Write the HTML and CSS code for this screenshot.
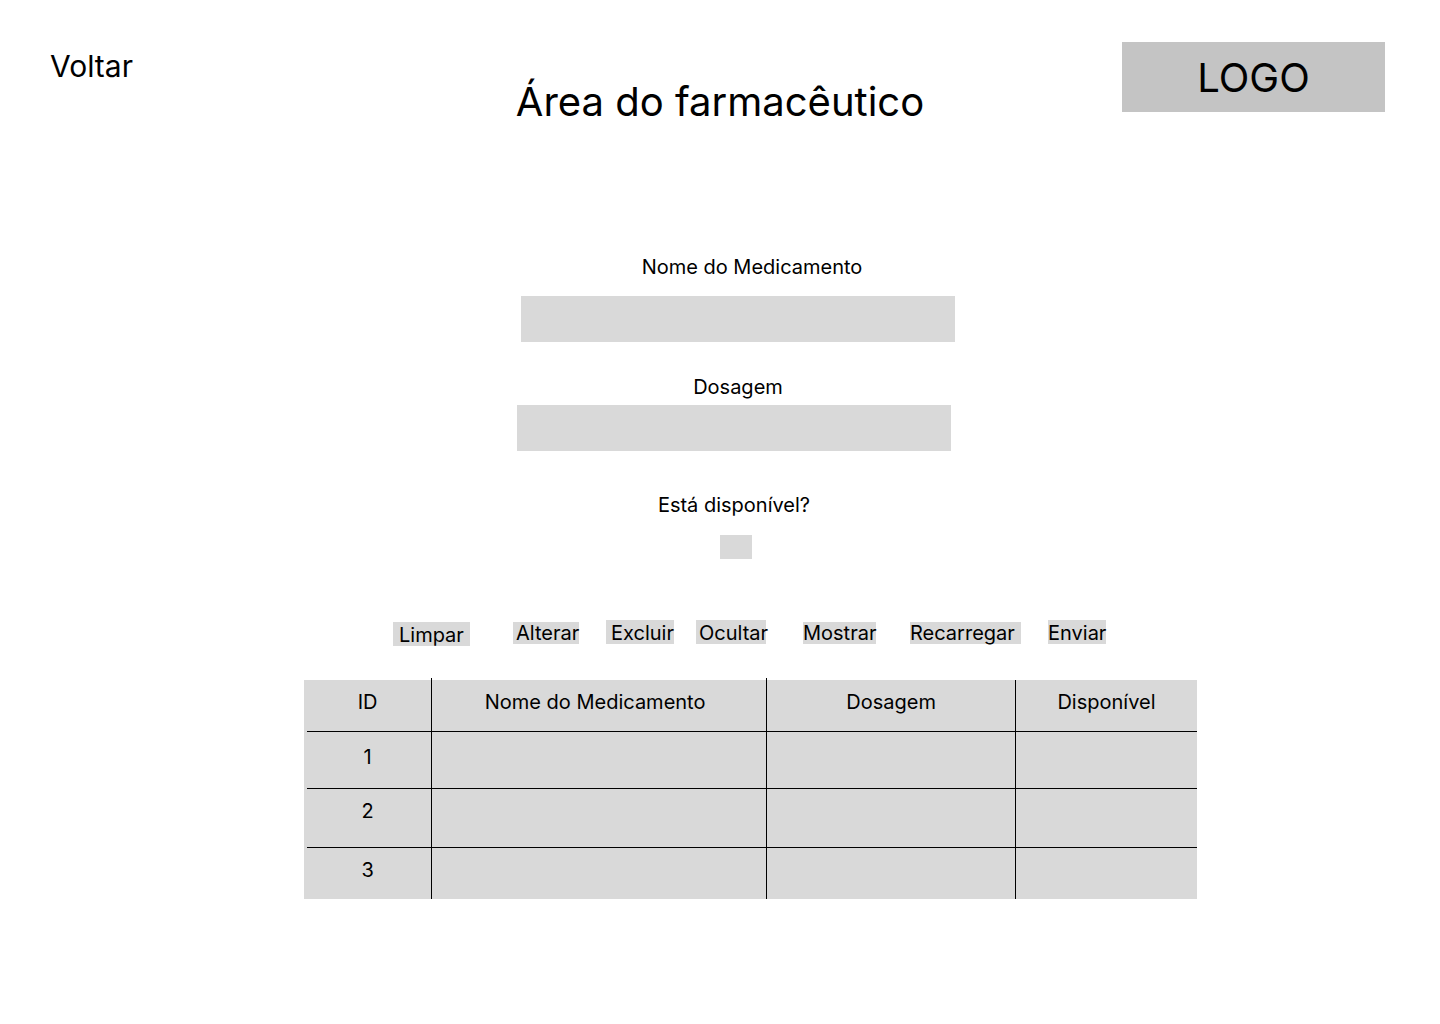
FILE: index.html
```html
<!DOCTYPE html>
<html lang="pt-BR">
<head>
<meta charset="utf-8">
<meta name="viewport" content="width=device-width, initial-scale=1">
<title>Área do farmacêutico</title>
<link rel="stylesheet" href="styles.css">
</head>
<body>
<header class="header">
  <a class="back" href="#">Voltar</a>
  <h1 class="title">Área do farmacêutico</h1>
  <div class="logo">LOGO</div>
</header>
<main class="main">
  <form class="form">
    <div class="field field-name">
      <label class="label" for="nome">Nome do Medicamento</label>
      <input class="input" id="nome" type="text">
    </div>
    <div class="field field-dose">
      <label class="label" for="dosagem">Dosagem</label>
      <input class="input" id="dosagem" type="text">
    </div>
    <div class="field field-available">
      <label class="label" for="disponivel">Está disponível?</label>
      <input class="check" id="disponivel" type="checkbox">
    </div>
  </form>
  <div class="actions">
    <button class="button low tall clear" type="button">Limpar</button>
    <button class="button low inset" type="button">Alterar</button>
    <button class="button tall indent" type="button">Excluir</button>
    <button class="button tall inset hide" type="button">Ocultar</button>
    <button class="button low" type="button">Mostrar</button>
    <button class="button low reload" type="button">Recarregar</button>
    <button class="button tall" type="button">Enviar</button>
  </div>
  <table class="table">
    <colgroup><col class="col-id"><col class="col-name"><col class="col-dose"><col class="col-available"></colgroup>
    <thead>
      <tr class="row-head"><th class="rule-up" scope="col">ID</th><th class="name rule-up" scope="col">Nome do Medicamento</th><th scope="col">Dosagem</th><th scope="col">Disponível</th></tr>
    </thead>
    <tbody>
      <tr class="row-first"><td>1</td><td></td><td></td><td></td></tr>
      <tr class="row-second"><td>2</td><td></td><td></td><td></td></tr>
      <tr class="row-last"><td>3</td><td></td><td></td><td></td></tr>
    </tbody>
  </table>
</main>
</body>
</html>
```
FILE: styles.css
```css
* {
  box-sizing: border-box;
}

body {
  margin: 0;
  background: #fff;
  color: #000;
  font-family: Inter, "Liberation Sans", sans-serif;
  font-size: 20px;
  line-height: 24px;
}

.header {
  display: grid;
  grid-template-columns: 1fr auto 1fr;
  align-items: start;
  padding: 42px 50px 0;
}

.back {
  justify-self: start;
  padding-top: 6px;
  color: inherit;
  font-size: 30px;
  line-height: 36px;
  text-decoration: none;
}

.title {
  margin: 36px 0 0;
  font-size: 40px;
  font-weight: 400;
  line-height: 48px;
}

.logo {
  justify-self: end;
  width: 100%;
  max-width: 263px;
  margin-right: 5px;
  padding: 12px 0 10px;
  background: #c4c4c4;
  font-size: 40px;
  line-height: 48px;
  text-align: center;
}

.main {
  display: flex;
  flex-direction: column;
  align-items: center;
  padding: 129px 0 40px;
}

/* The form column sits slightly right of the page centre. */
.form {
  width: 462px;
  max-width: 100%;
  padding-left: 28px;
}

.field {
  display: flex;
  flex-direction: column;
  align-items: center;
}

.field-name {
  gap: 17px;
  margin: 0 -4px 33px 4px;
}

.field-name .label {
  padding-left: 28px;
}

.field-dose {
  gap: 6px;
  margin-bottom: 42px;
}

.field-dose .label {
  padding-left: 8px;
}

.field-available {
  gap: 18px;
}

.input {
  width: 100%;
  height: 46px;
  padding: 0 12px;
  border: 0;
  border-radius: 0;
  background: #d9d9d9;
  font: inherit;
}

.check {
  appearance: none;
  width: 32px;
  height: 24px;
  margin: 0 0 0 4px;
  background: #d9d9d9;
}

.check:checked {
  background: #555;
}

.actions {
  display: grid;
  grid-template-columns: 120px 93px 90px 107px 107px 138px 58px;
  align-items: start;
  justify-items: start;
  margin: 61px 0 34px 59px;
}

.button {
  padding: 0;
  border: 0;
  border-radius: 0;
  background: #d9d9d9;
  color: inherit;
  font: inherit;
  line-height: 22px;
  text-align: left;
  white-space: nowrap;
}

.low {
  margin-top: 2px;
}

.tall {
  padding-top: 2px;
}

.inset {
  padding-left: 3px;
}

.indent {
  padding-left: 5px;
}

.clear {
  padding-right: 6px;
  padding-left: 6px;
}

.hide {
  width: 70px;
}

.reload {
  padding-right: 6px;
}

.table {
  width: 62%;
  min-width: 720px;
  margin-left: 61px;
  border-spacing: 0;
  table-layout: fixed;
  background: #d9d9d9;
}

.col-id {
  width: 128px;
}

.col-name {
  width: 335px;
}

.col-dose {
  width: 249px;
}

th,
td {
  padding: 10px 0 0;
  border-right: 1px solid #000;
  border-bottom: 1px solid #000;
  font-weight: 400;
  text-align: center;
  vertical-align: top;
}

th:last-child,
td:last-child {
  border-right: 0;
}

/* The horizontal rules start just inside the left edge of the table. */
th:first-child,
td:first-child {
  border-bottom: 0;
  background: linear-gradient(#000, #000) 3px 100% / 100% 1px no-repeat;
}

.name {
  padding-right: 8px;
}

/* The first two column rules run slightly above the table. */
.rule-up {
  position: relative;
}

.rule-up::after {
  content: "";
  position: absolute;
  top: -2px;
  right: -1px;
  width: 1px;
  height: 2px;
  background: #000;
}

.row-head {
  height: 52px;
}

.row-first {
  height: 57px;
}

.row-first td {
  padding-top: 13px;
}

.row-second {
  height: 59px;
}

.row-last {
  height: 51px;
}

.row-last td {
  border-bottom: 0;
  background: none;
}
```
